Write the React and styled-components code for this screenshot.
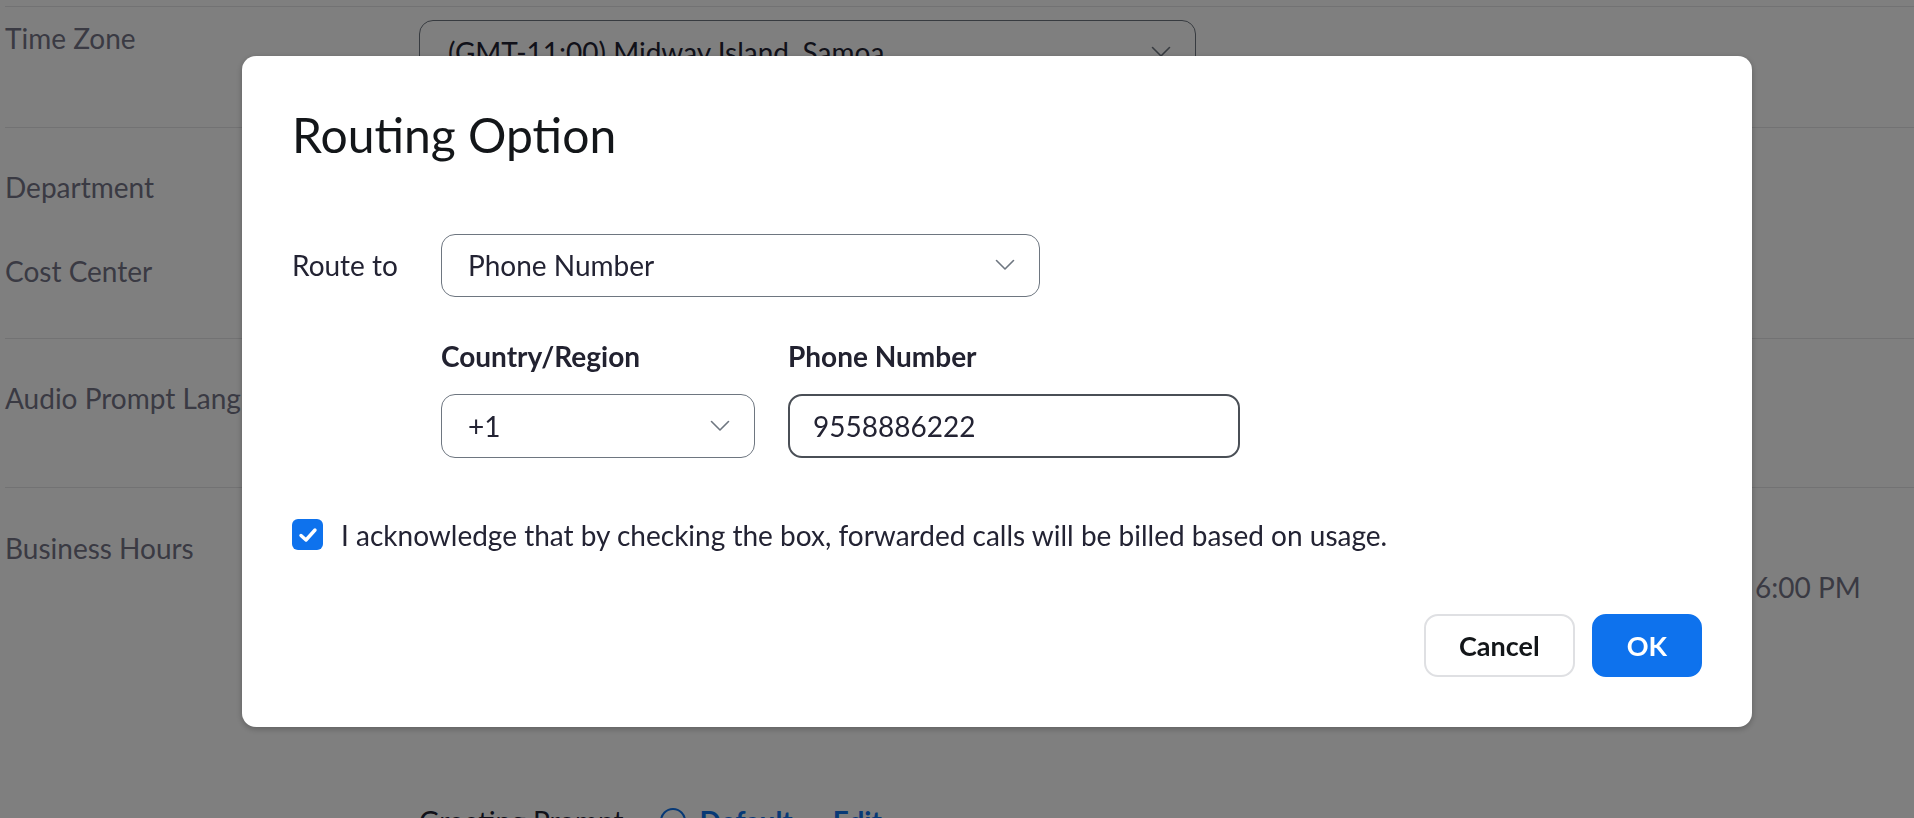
import React from "react";
import styled, { createGlobalStyle } from "styled-components";

const GlobalStyle = createGlobalStyle`
    html, body {
        margin: 0;
        padding: 0;
        font-family: Lato, "Open Sans", sans-serif;
    }
    * {
        box-sizing: border-box;
    }
`;

function Chevron() {
    return (
        <svg width="20" height="12" viewBox="0 0 20 12" fill="none">
            <polyline points="1.5,1.5 10,10 18.5,1.5" stroke="#6e7680" strokeWidth="1.6" strokeLinecap="round" strokeLinejoin="round" />
        </svg>
    );
}

function App() {
    return (
        <>
            <GlobalStyle />
            <Page>
                <Section $height={121} $pad={14}>
                    <Label>Time Zone</Label>
                    <Value>
                        <PageSelect>
                            <span>(GMT-11:00) Midway Island, Samoa</span>
                            <Chevron />
                        </PageSelect>
                    </Value>
                </Section>
                <Section $height={211} $pad={42}>
                    <LabelStack>
                        <Label>Department</Label>
                        <Label>Cost Center</Label>
                    </LabelStack>
                    <Value />
                </Section>
                <Section $height={149} $pad={42}>
                    <Label>Audio Prompt Language</Label>
                    <Value />
                </Section>
                <Section $height={400} $pad={43}>
                    <Label>Business Hours</Label>
                    <Value>
                        <HoursLine>
                            <span>Monday - Friday, 9:00 AM -</span>
                            <span>6:00 PM</span>
                        </HoursLine>
                        <GreetingRow>
                            <span>Greeting Prompt</span>
                            <RadioDot />
                            <LinkText>Default</LinkText>
                            <LinkText>Edit</LinkText>
                        </GreetingRow>
                    </Value>
                </Section>
            </Page>

            <Overlay>
                <Modal>
                    <Title>Routing Option</Title>

                    <RouteRow>
                        <FieldText>Route to</FieldText>
                        <Select>
                            <span>Phone Number</span>
                            <Chevron />
                        </Select>
                    </RouteRow>

                    <Fields>
                        <FieldLabel>Country/Region</FieldLabel>
                        <FieldLabel>Phone Number</FieldLabel>
                        <Select $tall>
                            <span>+1</span>
                            <Chevron />
                        </Select>
                        <Input defaultValue="9558886222" />
                    </Fields>

                    <CheckRow>
                        <CheckBox>
                            <svg width="20" height="16" viewBox="0 0 20 16" fill="none">
                                <polyline points="3,8.5 8,13 17,3" stroke="#fff" strokeWidth="3.4" strokeLinecap="round" strokeLinejoin="round" />
                            </svg>
                        </CheckBox>
                        <FieldText>I acknowledge that by checking the box, forwarded calls will be billed based on usage.</FieldText>
                    </CheckRow>

                    <Footer>
                        <Button>Cancel</Button>
                        <Button $primary>OK</Button>
                    </Footer>
                </Modal>
            </Overlay>
        </>
    );
}

const Page = styled.div`
    height: 100vh;
    overflow: hidden;
    background: #fff;
    padding: 6px 0 0 5px;
    font-size: 28px;
    color: #232333;
`
const Section = styled.div`
    display: grid;
    grid-template-columns: 414px 1fr;
    align-items: start;
    height: ${(p) => p.$height}px;
    padding-top: ${(p) => p.$pad}px;
    border-top: 1px solid #e4e4e6;
`
const Label = styled.div`
    color: #747487;
    line-height: 34px;
`
const LabelStack = styled.div`
    display: flex;
    flex-direction: column;
    gap: 50px;
`
const Value = styled.div`
    display: flex;
    flex-direction: column;
`
const PageSelect = styled.div`
    width: 777px;
    height: 63px;
    margin-top: -1px;
    border: 1.5px solid #6e7680;
    border-radius: 14px;
    padding: 0 24px 0 28px;
    display: flex;
    align-items: center;
    justify-content: space-between;
    color: #232333;
`
const HoursLine = styled.div`
    display: grid;
    grid-template-columns: 1336px auto;
    margin-top: 39px;
    line-height: 34px;
    color: #747487;
`
const GreetingRow = styled.div`
    display: flex;
    align-items: center;
    margin-top: 200px;
    line-height: 34px;
    color: #232333;
    gap: 14px;
`
const RadioDot = styled.span`
    width: 26px;
    height: 26px;
    border-radius: 50%;
    border: 2px solid #0e72ed;
    margin-left: 22px;
`
const LinkText = styled.span`
    color: #0e72ed;
    font-weight: 700;
    margin-right: 26px;
`

const Overlay = styled.div`
    position: fixed;
    inset: 0;
    background: rgba(0, 0, 0, 0.5);
    display: flex;
    align-items: flex-start;
    padding: 56px 0 0 242px;
`
const Modal = styled.div`
    width: 1510px;
    background: #fff;
    border-radius: 14px;
    padding: 50px;
    box-shadow: 0 2px 6px rgba(0, 0, 0, 0.25);
    color: #232333;
    font-size: 28px;
`
const Title = styled.h2`
    margin: 0;
    font-size: 48px;
    font-weight: 400;
    line-height: 1.2;
    color: #131619;
`
const RouteRow = styled.div`
    display: grid;
    grid-template-columns: 149px 599px;
    align-items: center;
    margin-top: 70px;
`
const FieldText = styled.span`
    line-height: 34px;
    color: #232333;
`
const Select = styled.div`
    height: ${(p) => (p.$tall ? 64 : 63)}px;
    border: 1.5px solid #6e7680;
    border-radius: 14px;
    padding: 0 24px 0 26px;
    display: flex;
    align-items: center;
    justify-content: space-between;
    color: #232333;
`
const Fields = styled.div`
    display: grid;
    grid-template-columns: 314px 452px;
    column-gap: 33px;
    row-gap: 21px;
    margin: 42px 0 0 149px;
`
const FieldLabel = styled.div`
    font-weight: 700;
    line-height: 34px;
    color: #222230;
`
const Input = styled.input`
    height: 64px;
    border: 2px solid #4a4f56;
    border-radius: 14px;
    padding: 0 23px;
    font-family: inherit;
    font-size: 28px;
    color: #232333;
    outline: none;
`
const CheckRow = styled.div`
    display: flex;
    align-items: center;
    gap: 18px;
    margin-top: 60px;
`
const CheckBox = styled.span`
    width: 31px;
    height: 31px;
    border-radius: 6px;
    background: #0e72ed;
    display: flex;
    align-items: center;
    justify-content: center;
    flex-shrink: 0;
`
const Footer = styled.div`
    display: flex;
    justify-content: flex-end;
    gap: 17px;
    margin-top: 62px;
`
const Button = styled.button`
    height: 63px;
    padding: 0 33px;
    border-radius: 14px;
    font-family: inherit;
    font-size: 27px;
    font-weight: 700;
    cursor: pointer;
    border: 2px solid ${(p) => (p.$primary ? "#0e72ed" : "#dfe0e3")};
    background: ${(p) => (p.$primary ? "#0e72ed" : "#fff")};
    color: ${(p) => (p.$primary ? "#fff" : "#131619")};
`

export default App;
